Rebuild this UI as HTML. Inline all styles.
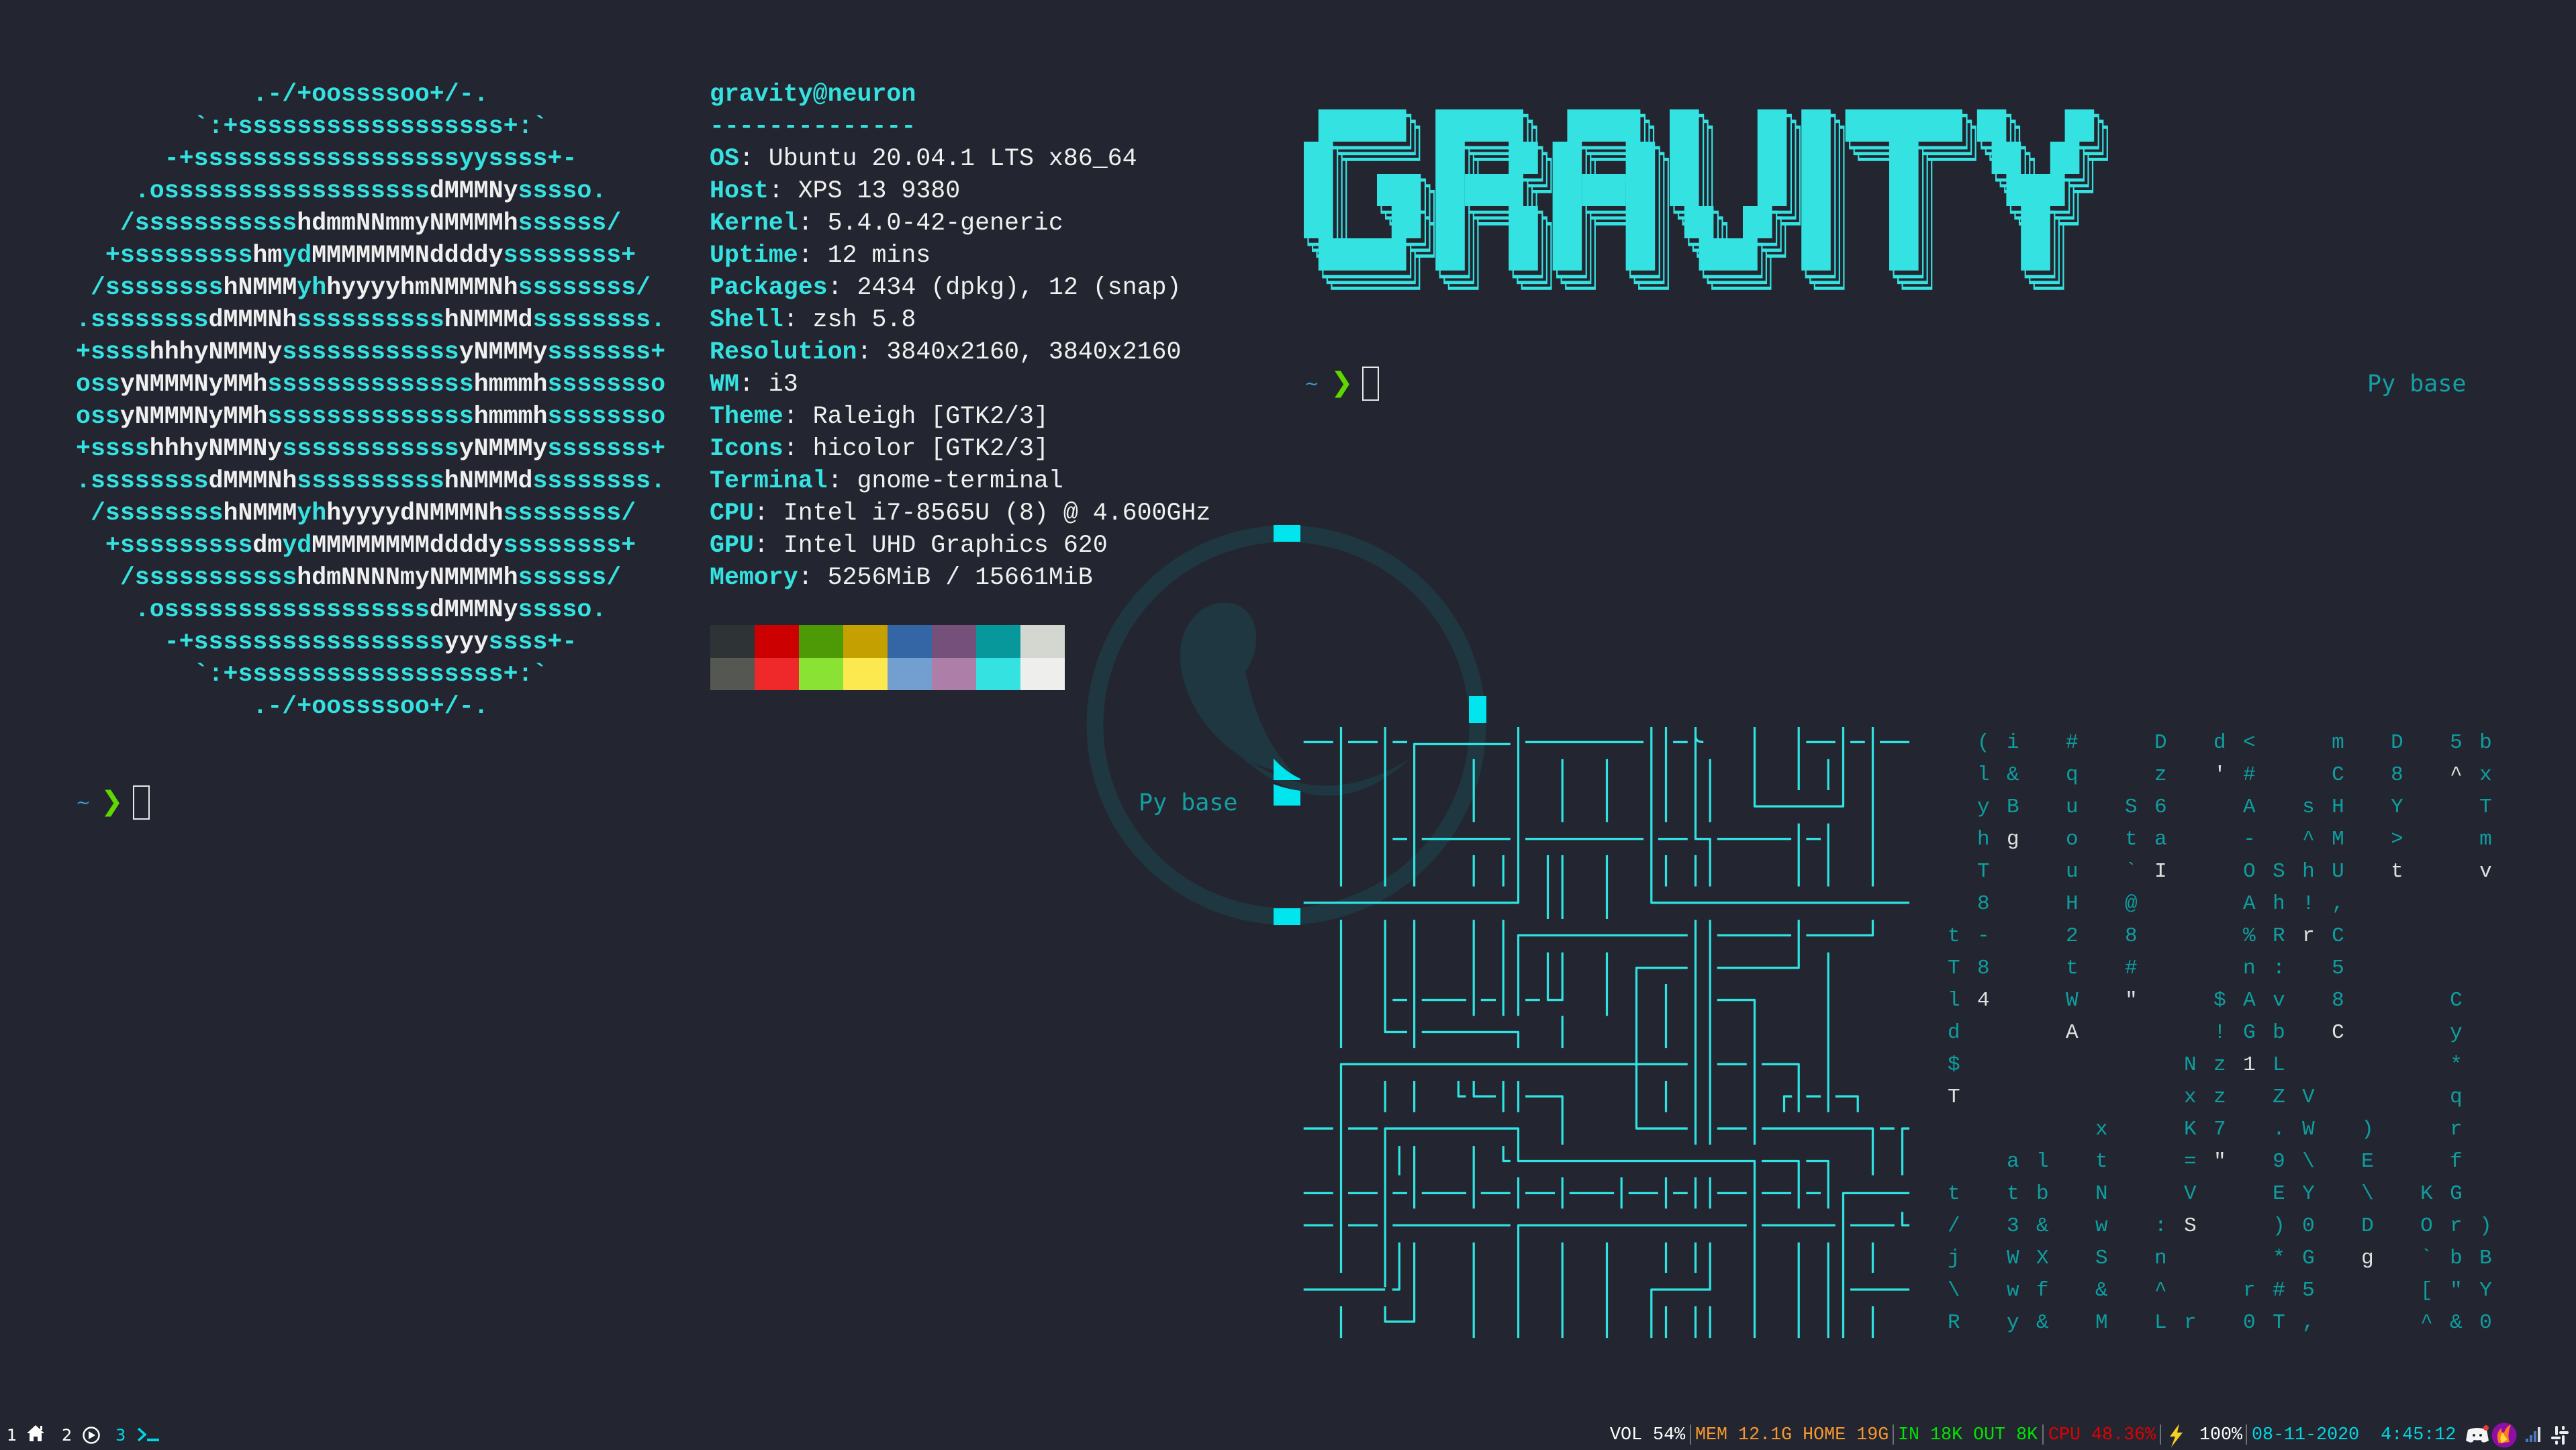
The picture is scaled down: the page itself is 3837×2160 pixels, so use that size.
<!DOCTYPE html>
<html><head><meta charset="utf-8"><style>
html,body{margin:0;padding:0;background:#232630;width:3837px;height:2160px;overflow:hidden}
.a{position:absolute;margin:0;white-space:pre}
.nf{font-family:"Liberation Mono",monospace;font-size:36.6px;line-height:48px;font-weight:bold;color:#34e2e2}
.nf b{color:#f0f0f0}
.inf{font-family:"Liberation Mono",monospace;font-size:36.6px;line-height:48px;color:#f0f0f0}
.inf b{color:#34e2e2}
.mx{font-family:"Liberation Mono",monospace;font-size:31px;letter-spacing:3.4px;line-height:48px;color:#0e9ea0}
.mx b{color:#e0e0e0;font-weight:normal}
.sb{font-family:"Liberation Mono",monospace;font-size:26.7px;line-height:30px;top:2123px}
</style></head><body>

<pre class="a nf" style="left:113px;top:117px">            .-/+oossssoo+/-.
        `:+ssssssssssssssssss+:`
      -+ssssssssssssssssssyyssss+-
    .ossssssssssssssssss<b>dMMMNy</b>sssso.
   /sssssssssss<b>hdmmNNmmyNMMMMh</b>ssssss/
  +sssssssss<b>hm</b>yd<b>MMMMMMMNddddy</b>ssssssss+
 /ssssssss<b>hNMMM</b>yh<b>hyyyyhmNMMMNh</b>ssssssss/
.ssssssss<b>dMMMNh</b>ssssssssss<b>hNMMMd</b>ssssssss.
+ssss<b>hhhyNMMNy</b>ssssssssssss<b>yNMMMy</b>sssssss+
oss<b>yNMMMNyMMh</b>ssssssssssssss<b>hmmmh</b>ssssssso
oss<b>yNMMMNyMMh</b>ssssssssssssss<b>hmmmh</b>ssssssso
+ssss<b>hhhyNMMNy</b>ssssssssssss<b>yNMMMy</b>sssssss+
.ssssssss<b>dMMMNh</b>ssssssssss<b>hNMMMd</b>ssssssss.
 /ssssssss<b>hNMMM</b>yh<b>hyyyydNMMMNh</b>ssssssss/
  +sssssssss<b>dm</b>yd<b>MMMMMMMMddddy</b>ssssssss+
   /sssssssssss<b>hdmNNNNmyNMMMMh</b>ssssss/
    .ossssssssssssssssss<b>dMMMNy</b>sssso.
      -+sssssssssssssssss<b>yyy</b>ssss+-
        `:+ssssssssssssssssss+:`
            .-/+oossssoo+/-.</pre>

<pre class="a inf" style="left:1057px;top:117px"><b style="font-weight:bold">gravity</b><b style="font-weight:bold">@</b><b style="font-weight:bold">neuron</b>
<b>--------------</b>
<b style="font-weight:bold">OS</b>: Ubuntu 20.04.1 LTS x86_64
<b style="font-weight:bold">Host</b>: XPS 13 9380
<b style="font-weight:bold">Kernel</b>: 5.4.0-42-generic
<b style="font-weight:bold">Uptime</b>: 12 mins
<b style="font-weight:bold">Packages</b>: 2434 (dpkg), 12 (snap)
<b style="font-weight:bold">Shell</b>: zsh 5.8
<b style="font-weight:bold">Resolution</b>: 3840x2160, 3840x2160
<b style="font-weight:bold">WM</b>: i3
<b style="font-weight:bold">Theme</b>: Raleigh [GTK2/3]
<b style="font-weight:bold">Icons</b>: hicolor [GTK2/3]
<b style="font-weight:bold">Terminal</b>: gnome-terminal
<b style="font-weight:bold">CPU</b>: Intel i7-8565U (8) @ 4.600GHz
<b style="font-weight:bold">GPU</b>: Intel UHD Graphics 620
<b style="font-weight:bold">Memory</b>: 5256MiB / 15661MiB</pre>

<svg class="a" style="left:0;top:0" width="3837" height="2160" viewBox="0 0 3837 2160">
 <g>
  <rect x="1058" y="931" width="66" height="49" fill="#2e3436"/><rect x="1124" y="931" width="66" height="49" fill="#cc0000"/><rect x="1190" y="931" width="66" height="49" fill="#4e9a06"/><rect x="1256" y="931" width="66" height="49" fill="#c4a000"/><rect x="1322" y="931" width="66" height="49" fill="#3465a4"/><rect x="1388" y="931" width="66" height="49" fill="#75507b"/><rect x="1454" y="931" width="66" height="49" fill="#06989a"/><rect x="1520" y="931" width="66" height="49" fill="#d3d7cf"/>
  <rect x="1058" y="980" width="66" height="48" fill="#555753"/><rect x="1124" y="980" width="66" height="48" fill="#ef2929"/><rect x="1190" y="980" width="66" height="48" fill="#8ae234"/><rect x="1256" y="980" width="66" height="48" fill="#fce94f"/><rect x="1322" y="980" width="66" height="48" fill="#729fcf"/><rect x="1388" y="980" width="66" height="48" fill="#ad7fa8"/><rect x="1454" y="980" width="66" height="48" fill="#34e2e2"/><rect x="1520" y="980" width="66" height="48" fill="#eeeeec"/>
 </g>
 <circle cx="1916" cy="1080" r="285" fill="none" stroke="#1f3740" stroke-width="25"/>
 <path d="M1760 1000 C1745 920 1810 880 1850 905 C1880 925 1875 975 1855 1000 C1870 1070 1890 1110 1925 1150 C1850 1150 1775 1080 1760 1000 Z" fill="#1f3740"/>
 <path d="M1830 1110 Q1960 1220 2100 1130 Q1970 1250 1830 1110 Z" fill="#1f3740"/>
 <rect x="1897" y="782" width="40" height="25" fill="#00e5ee"/>
 <rect x="2188" y="1037" width="26" height="40" fill="#00e5ee"/>
 <rect x="1897" y="1353" width="40" height="25" fill="#00e5ee"/>
 <path d="M1897 1130 Q1915 1150 1937 1160 L1937 1162 L1897 1162 Z" fill="#00e5ee"/>
 <path d="M1897 1168 Q1915 1175 1937 1178 L1937 1200 L1897 1200 Z" fill="#00e5ee"/>

 <g transform="translate(1942,163) scale(21.8,48)">
  <g id="gl3" fill="#232630" stroke="#34e2e2" stroke-width="0.1" vector-effect="non-scaling-stroke" transform="translate(0.9,0.55)">
   <rect x="1" y="0" width="6" height="1"/><rect x="0" y="1" width="2" height="3"/><rect x="1" y="4" width="6" height="1"/><rect x="5" y="2" width="3" height="1"/><rect x="6" y="3" width="2" height="1"/>
   <rect x="9" y="0" width="6" height="1"/><rect x="9" y="1" width="2" height="4"/><rect x="14" y="1" width="2" height="1"/><rect x="11" y="2" width="4" height="1"/><rect x="14" y="3" width="2" height="2"/>
   <rect x="18" y="0" width="5" height="1"/><rect x="17" y="1" width="2" height="4"/><rect x="22" y="1" width="2" height="4"/><rect x="19" y="2" width="3" height="1"/>
   <rect x="25" y="0" width="2" height="3"/><rect x="31" y="0" width="2" height="3"/><rect x="26" y="3" width="2" height="1"/><rect x="30" y="3" width="2" height="1"/><rect x="27" y="4" width="4" height="1"/>
   <rect x="34" y="0" width="2" height="5"/>
   <rect x="37" y="0" width="8" height="1"/><rect x="40" y="1" width="2" height="4"/>
   <rect x="46" y="0" width="2" height="1"/><rect x="47" y="1" width="2" height="1"/><rect x="52" y="0" width="2" height="1"/><rect x="51" y="1" width="2" height="1"/><rect x="48" y="2" width="4" height="1"/><rect x="49" y="3" width="2" height="2"/>
  </g>
  <use href="#gl3" transform="translate(-0.3,-0.18)"/>
  <use href="#gl3" transform="translate(-0.6,-0.36)"/>
  <g fill="#34e2e2">
   <rect x="1" y="0" width="6" height="1"/><rect x="0" y="1" width="2" height="3"/><rect x="1" y="4" width="6" height="1"/><rect x="5" y="2" width="3" height="1"/><rect x="6" y="3" width="2" height="1"/>
   <rect x="9" y="0" width="6" height="1"/><rect x="9" y="1" width="2" height="4"/><rect x="14" y="1" width="2" height="1"/><rect x="11" y="2" width="4" height="1"/><rect x="14" y="3" width="2" height="2"/>
   <rect x="18" y="0" width="5" height="1"/><rect x="17" y="1" width="2" height="4"/><rect x="22" y="1" width="2" height="4"/><rect x="19" y="2" width="3" height="1"/>
   <rect x="25" y="0" width="2" height="3"/><rect x="31" y="0" width="2" height="3"/><rect x="26" y="3" width="2" height="1"/><rect x="30" y="3" width="2" height="1"/><rect x="27" y="4" width="4" height="1"/>
   <rect x="34" y="0" width="2" height="5"/>
   <rect x="37" y="0" width="8" height="1"/><rect x="40" y="1" width="2" height="4"/>
   <rect x="46" y="0" width="2" height="1"/><rect x="47" y="1" width="2" height="1"/><rect x="52" y="0" width="2" height="1"/><rect x="51" y="1" width="2" height="1"/><rect x="48" y="2" width="4" height="1"/><rect x="49" y="3" width="2" height="2"/>
  </g>
 </g>

 <g transform="translate(1930,1060) scale(0.5867,0.6059)" fill="none" stroke="#30e3e3" stroke-width="5.5" stroke-linejoin="round">
  <path d="M20 75H95 M133 75H208 M246 75H283 M301 430V80H545 M583 75H883 M958 75H995 M1015 38V60 Q1015 75 1035 75 M1296 75H1370 M1408 75H1445 M1483 75H1558
  M115 38V430 M227 38V430 M452 117V272 M565 38V470H20 M677 117V272 M790 117V272 M903 38V470H1558 M940 38V272 M1015 38V313H1052V430 M1052 117V272 M1165 38V233H1390V38 M1277 38V193 M1352 117V193 M1465 38V430
  M246 313H283 M320 313H545 M583 313H883 M920 313H995 M1070 313H1258 M1296 313H1333
  M1277 275V430 M1352 275V430 M452 353V430 M527 353V430 M640 353V510 M677 353V510 M790 353V510 M940 353V430 M1015 353V430
  M115 512V827 M227 512V788H283 M301 512V827 M452 512V748 M527 512V748 M565 748V550H995 M1015 512V1065 M1052 512V1065 M1070 630H1277V512 M1296 550H1465V512 M1070 550H1258
  M640 592V709H677V592 M790 592V748 M1352 592V985
  M995 630H865V1025H995 M940 670V827
  M246 709H283 M320 709H433 M470 709H508 M583 709H620 M1070 709H1165V1065
  M677 748V827 M320 788H565V827
  M995 867H115V1380 M1070 867H1145 M1183 867H1277V985
  M227 908V985 M301 908V985 M413 908V946H432 M452 908V946H508 M527 908V985 M565 908V985 M583 946H677V1065 M940 908V985
  M1240 985V946H1260 M1296 946H1333 M1370 946H1427V985
  M20 1025H95 M133 1025H208 M227 1415V1025H565V1105H1165V1540 M1070 1025H1145 M1183 1025H1465V1140 M1483 1025H1520 M1558 1025H1540V1140
  M263 1068V1140 M301 1068V1222 M452 1068V1222 M527 1068V1105H545
  M1183 1105H1277V1222 M1296 1105H1352V1222
  M20 1184H95 M133 1184H208 M246 1184H283 M320 1184H433 M470 1184H545 M583 1184H658 M695 1184H808 M845 1184H920 M958 1184H995 M1070 1184H1145 M1183 1184H1258 M1296 1184H1333 M1558 1184H1390V1540
  M565 1145V1222 M677 1145V1222 M827 1145V1222 M940 1145V1222 M1015 1145V1222 M1052 1145V1222
  M20 1263H95 M133 1263H208 M246 1263H545 M1145 1263H565V1540 M1183 1263H1370 M1408 1263H1520 M1540 1230V1263H1558
  M263 1305V1421H245 M301 1305V1500H227V1462 M452 1305V1540 M677 1305V1540 M790 1305V1540 M940 1305V1380 M1015 1305V1380 M1052 1305V1421H903V1540 M1277 1305V1540 M1352 1305V1540 M1465 1305V1380
  M20 1421H227 M1408 1421H1558
  M115 1462V1540 M940 1462V1540 M1015 1462V1540 M1052 1462V1540 M1465 1462V1540"/>
 </g>

 <g fill="#ffffff">
  <path d="M40 2135 L53 2123 L66 2135 L62 2135 L62 2147 L56 2147 L56 2140 L50 2140 L50 2147 L44 2147 L44 2135 Z"/>
  <rect x="60" y="2124" width="3" height="6"/>
 </g>
 <circle cx="136" cy="2138" r="11.5" fill="none" stroke="#fff" stroke-width="2.5"/>
 <path d="M132 2132 L142 2138 L132 2144 Z" fill="#fff"/>
 <path d="M206 2128 L216 2137 L206 2146" fill="none" stroke="#00d7e5" stroke-width="3.5"/>
 <rect x="219" y="2143" width="18" height="4" fill="#00d7e5"/>
 <g stroke="#8a8a8a" stroke-width="1.5">
  <line x1="2518" y1="2122" x2="2518" y2="2152"/><line x1="2820" y1="2122" x2="2820" y2="2152"/><line x1="3043" y1="2122" x2="3043" y2="2152"/><line x1="3218" y1="2122" x2="3218" y2="2152"/><line x1="3346" y1="2122" x2="3346" y2="2152"/>
 </g>
 <path d="M3246 2121 L3232 2140 L3240 2140 L3234 2156 L3251 2134 L3243 2134 Z" fill="#f5d020"/>
 <path d="M3676 2130 Q3690 2124 3704 2130 L3707 2146 Q3700 2150 3697 2148 L3695 2145 Q3690 2146 3685 2145 L3683 2148 Q3680 2150 3673 2146 Z" fill="#f4f4f4"/>
 <circle cx="3685" cy="2138" r="2" fill="#232630"/><circle cx="3695" cy="2138" r="2" fill="#232630"/>
 <circle cx="3703" cy="2127" r="4" fill="#e53935"/>
 <circle cx="3730" cy="2138" r="18.5" fill="#8e0ea8"/>
 <path d="M3722 2150 Q3716 2136 3726 2127 Q3725 2135 3730 2134 Q3733 2125 3740 2122 Q3734 2138 3738 2148 Z" fill="#ff7a1a"/>
 <path d="M3726 2150 Q3722 2140 3728 2134 Q3732 2142 3735 2144 Z" fill="#ffd83a"/>
 <rect x="3762" y="2143" width="4" height="5" fill="#4a78c0"/><rect x="3768" y="2138" width="4" height="10" fill="#4a78c0"/><rect x="3774" y="2132" width="4" height="16" fill="#4a78c0"/><rect x="3780" y="2126" width="4" height="22" fill="#dddddd"/>
 <g stroke="#eeeeee" stroke-width="4" stroke-linecap="round">
  <line x1="3808" y1="2126" x2="3808" y2="2136"/><line x1="3818" y1="2140" x2="3818" y2="2150"/><line x1="3802" y1="2142" x2="3812" y2="2142"/><line x1="3814" y1="2134" x2="3824" y2="2134"/>
  <line x1="3818" y1="2126" x2="3818" y2="2128"/><line x1="3808" y1="2148" x2="3808" y2="2150"/>
 </g>
</svg>

<div class="a" style="left:113px;top:1172px;font-family:'DejaVu Sans',sans-serif;font-size:26px;line-height:48px;color:#3a9ed8">~</div>
<div class="a" style="left:150px;top:1170px;font-family:'DejaVu Sans',sans-serif;font-size:40px;line-height:48px;color:#5fd700;font-weight:bold">❯</div>
<div class="a" style="left:198px;top:1170px;width:21px;height:47px;border:2px solid #e8e8e8"></div>

<div class="a" style="left:1943px;top:548px;font-family:'DejaVu Sans',sans-serif;font-size:26px;line-height:48px;color:#3a9ed8">~</div>
<div class="a" style="left:1982px;top:546px;font-family:'DejaVu Sans',sans-serif;font-size:40px;line-height:48px;color:#5fd700;font-weight:bold">❯</div>
<div class="a" style="left:2029px;top:546px;width:21px;height:47px;border:2px solid #e8e8e8"></div>
<div class="a" style="left:3526px;top:548px;font-family:'DejaVu Sans Mono',monospace;font-size:35px;line-height:48px;color:#139fa3">Py base</div>
<div class="a" style="left:1696px;top:1172px;font-family:'DejaVu Sans Mono',monospace;font-size:35px;line-height:48px;color:#139fa3">Py base</div>

<pre class="a mx" style="left:2901px;top:1083px">  ( i   #     D   d &lt;     m   D   5 b
  l &amp;   q     z   <b>'</b> #     C   8   <b>^</b> x
  y B   u   S 6     A   s H   Y     T
  h <b>g</b>   o   t a     -   ^ M   &gt;     m
  T     u   ` <b>I</b>     O S h U   <b>t</b>     <b>v</b>
  8     H   @       A h ! ,
t -     2   8       % R <b>r</b> C
T 8     t   #       n :   5
l <b>4</b>     W   <b>"</b>     $ A v   8       C
d       <b>A</b>         ! G b   <b>C</b>       y
$               N z <b>1</b> L           *
<b>T</b>               x z   Z V         q
          x     K 7   . W   )     r
    a l   t     = <b>"</b>   9 \   E     f
t   t b   N     V     E Y   \   K G
/   3 &amp;   w   : <b>S</b>     ) 0   D   O r )
j   W X   S   n       * G   <b>g</b>   ` b B
\   w f   &amp;   ^     r # 5       [ " Y
R   y &amp;   M   L r   0 T ,       ^ &amp; 0</pre>

<div class="a sb" style="left:10px;color:#fff;font-family:'DejaVu Sans',sans-serif;font-size:24px">1</div>
<div class="a sb" style="left:92px;color:#fff;font-family:'DejaVu Sans',sans-serif;font-size:24px">2</div>
<div class="a sb" style="left:172px;color:#00d7e5;font-family:'DejaVu Sans',sans-serif;font-size:24px">3</div>
<div class="a sb" style="left:2398px;color:#ffffff">VOL 54%</div>
<div class="a sb" style="left:2525px;color:#f7982e">MEM 12.1G HOME 19G</div>
<div class="a sb" style="left:2827px;color:#00e400">IN 18K OUT 8K</div>
<div class="a sb" style="left:3051px;color:#e00000">CPU 48.36%</div>
<div class="a sb" style="left:3276px;color:#ffffff">100%</div>
<div class="a sb" style="left:3354px;color:#00d7e5">08-11-2020  4:45:12</div>
</body></html>
